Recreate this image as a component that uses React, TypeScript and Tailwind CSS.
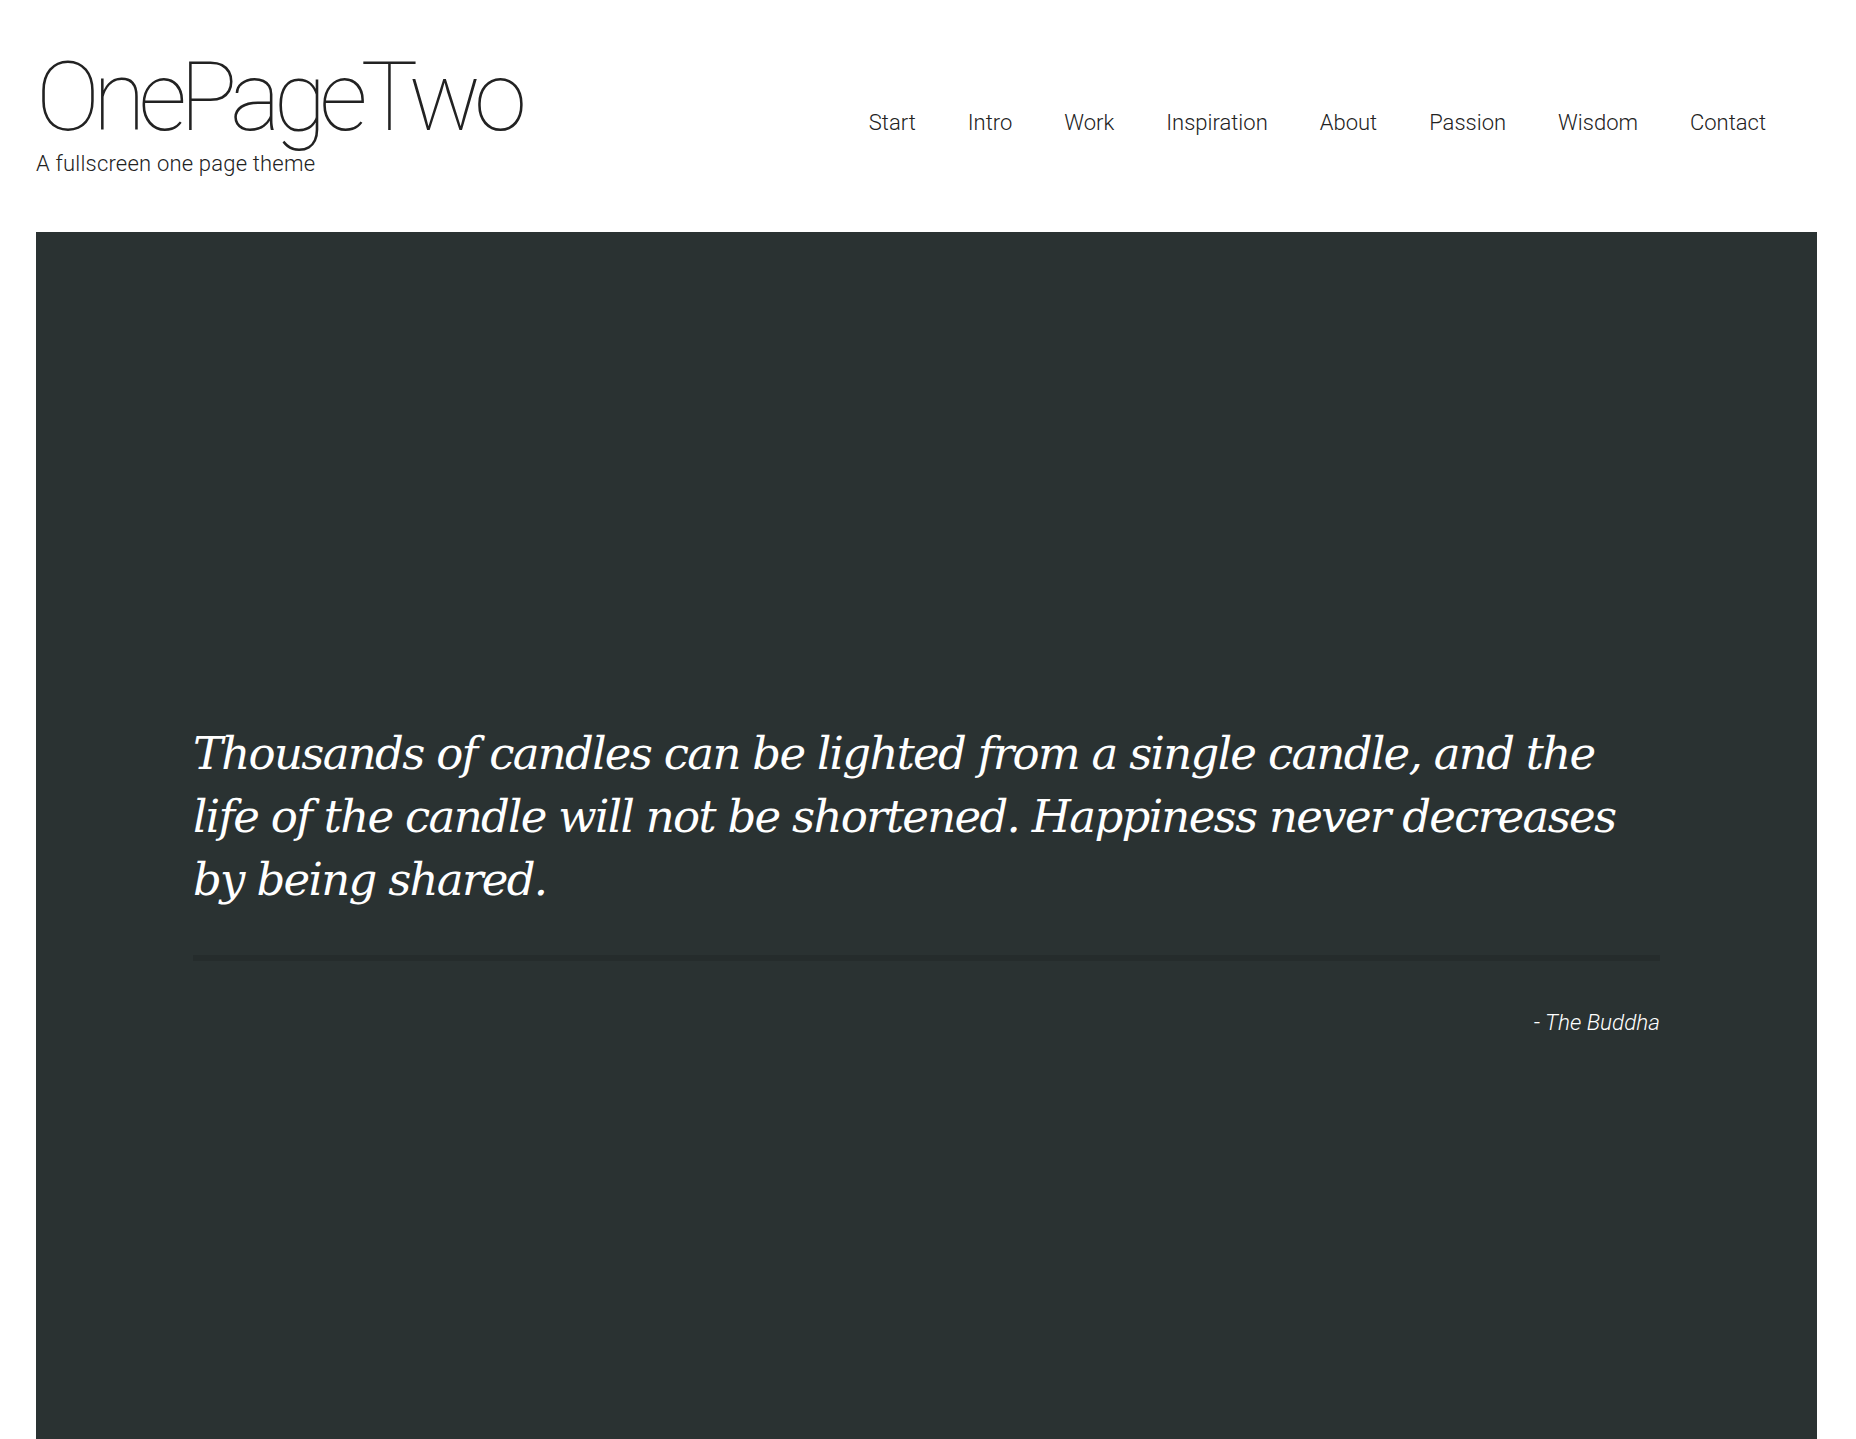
import React from "react";

const navItems = ["Start", "Intro", "Work", "Inspiration", "About", "Passion", "Wisdom", "Contact"];

export default function App() {
  return (
    <div className="flex h-screen flex-col overflow-hidden bg-white pl-[36px] pr-[39px]" style={{ fontFamily: "Roboto, 'Liberation Sans', sans-serif" }}>
      <header className="flex h-[232px] shrink-0 items-start justify-between">
        <div className="pt-[49px]">
          <div className="text-[96px] font-thin leading-none tracking-[-7px] text-[#222]">OnePageTwo</div>
          <div className="mt-[8px] text-[22px] font-light leading-none tracking-[0.2px] text-[#222]">A fullscreen one page theme</div>
        </div>
        <nav className="mr-[51px] flex gap-[52px] pt-[110px] text-[22px] font-light leading-[26px] text-[#222]">
          {navItems.map((n) => (
            <a key={n} href="#" className="block">
              {n}
            </a>
          ))}
        </nav>
      </header>
      <main className="flex-1 bg-[#2a3232] px-[157px] pt-[490px]">
        <blockquote
          className="text-[45px] italic leading-[63px] tracking-[-1.7px] text-white"
          style={{ fontFamily: "'DejaVu Serif', 'Liberation Serif', serif" }}
        >
          <span className="block whitespace-nowrap">Thousands of candles can be lighted from a single candle, and the</span>
          <span className="block whitespace-nowrap">life of the candle will not be shortened. Happiness never decreases</span>
          <span className="block whitespace-nowrap">by being shared.</span>
        </blockquote>
        <div className="mt-[44px] h-[6px] bg-[#252c2c]" />
        <div className="mt-[50px] text-right text-[22.5px] font-light italic leading-none text-white">- The Buddha</div>
      </main>
    </div>
  );
}
